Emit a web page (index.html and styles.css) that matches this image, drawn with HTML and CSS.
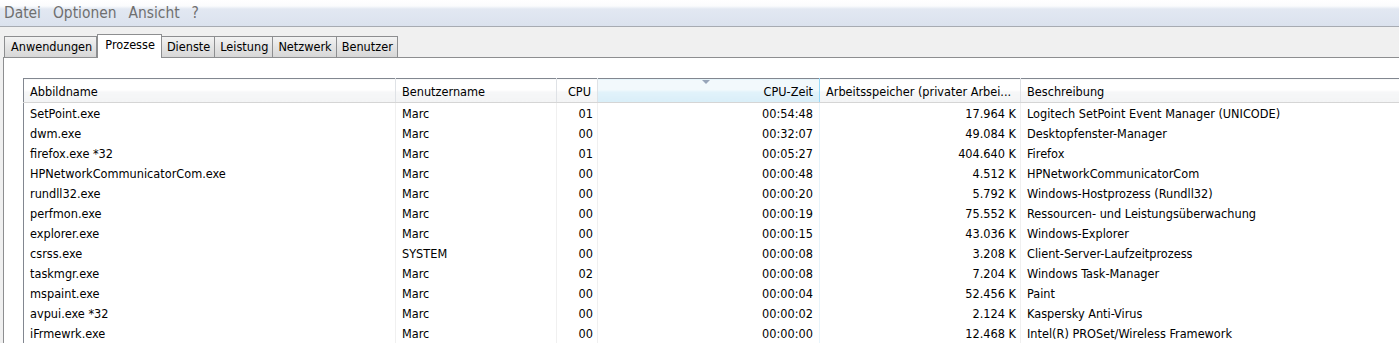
FILE: index.html
```html
<!DOCTYPE html>
<html lang="de">
<head>
  <meta charset="UTF-8">
  <title>Windows Task-Manager</title>
  <link rel="stylesheet" href="styles.css">
</head>
<body>
<div class="menubar">
  <span>Datei</span>
  <span>Optionen</span>
  <span>Ansicht</span>
  <span>?</span>
</div>
<div class="tabs">
  <a class="tab">Anwendungen</a>
  <a class="tab active">Prozesse</a>
  <a class="tab">Dienste</a>
  <a class="tab">Leistung</a>
  <a class="tab">Netzwerk</a>
  <a class="tab">Benutzer</a>
</div>
<div class="panel">
  <table class="list" cellspacing="0" cellpadding="0">
    <colgroup>
      <col class="c-name">
      <col class="c-user">
      <col class="c-cpu">
      <col class="c-time">
      <col class="c-mem">
      <col class="c-desc">
    </colgroup>
    <thead>
      <tr>
        <th>Abbildname</th>
        <th>Benutzername</th>
        <th class="num">CPU</th>
        <th class="num sorted"><span class="arrow"></span>CPU-Zeit</th>
        <th>Arbeitsspeicher (privater Arbei...</th>
        <th>Beschreibung</th>
      </tr>
    </thead>
    <tbody>
      <tr><td>SetPoint.exe</td><td>Marc</td><td class="num">01</td><td class="num sorted">00:54:48</td><td class="num">17.964 K</td><td>Logitech SetPoint Event Manager (UNICODE)</td></tr>
      <tr><td>dwm.exe</td><td>Marc</td><td class="num">00</td><td class="num sorted">00:32:07</td><td class="num">49.084 K</td><td>Desktopfenster-Manager</td></tr>
      <tr><td>firefox.exe *32</td><td>Marc</td><td class="num">01</td><td class="num sorted">00:05:27</td><td class="num">404.640 K</td><td>Firefox</td></tr>
      <tr><td>HPNetworkCommunicatorCom.exe</td><td>Marc</td><td class="num">00</td><td class="num sorted">00:00:48</td><td class="num">4.512 K</td><td>HPNetworkCommunicatorCom</td></tr>
      <tr><td>rundll32.exe</td><td>Marc</td><td class="num">00</td><td class="num sorted">00:00:20</td><td class="num">5.792 K</td><td>Windows-Hostprozess (Rundll32)</td></tr>
      <tr><td>perfmon.exe</td><td>Marc</td><td class="num">00</td><td class="num sorted">00:00:19</td><td class="num">75.552 K</td><td>Ressourcen- und Leistungsüberwachung</td></tr>
      <tr><td>explorer.exe</td><td>Marc</td><td class="num">00</td><td class="num sorted">00:00:15</td><td class="num">43.036 K</td><td>Windows-Explorer</td></tr>
      <tr><td>csrss.exe</td><td>SYSTEM</td><td class="num">00</td><td class="num sorted">00:00:08</td><td class="num">3.208 K</td><td>Client-Server-Laufzeitprozess</td></tr>
      <tr><td>taskmgr.exe</td><td>Marc</td><td class="num">02</td><td class="num sorted">00:00:08</td><td class="num">7.204 K</td><td>Windows Task-Manager</td></tr>
      <tr><td>mspaint.exe</td><td>Marc</td><td class="num">00</td><td class="num sorted">00:00:04</td><td class="num">52.456 K</td><td>Paint</td></tr>
      <tr><td>avpui.exe *32</td><td>Marc</td><td class="num">00</td><td class="num sorted">00:00:02</td><td class="num">2.124 K</td><td>Kaspersky Anti-Virus</td></tr>
      <tr><td>iFrmewrk.exe</td><td>Marc</td><td class="num">00</td><td class="num sorted">00:00:00</td><td class="num">12.468 K</td><td>Intel(R) PROSet/Wireless Framework</td></tr>
    </tbody>
  </table>
</div>
</body>
</html>
```

FILE: styles.css
```css
* {
  margin: 0;
  padding: 0;
  box-sizing: border-box;
}
html, body {
  width: 100%;
  height: 100%;
  overflow: hidden;
}
body {
  background-color: #f0f0f0;
  font-family: "DejaVu Sans", sans-serif;
  font-stretch: condensed;
  font-size: 12.6px;
  color: #000;
}
.menubar {
  height: 27px;
  padding: 0 0 1px 4px;
  display: flex;
  align-items: center;
  gap: 12px;
  background-image: linear-gradient(#ffffff 0px, #fbfcfd 6px, #e2e8f2 9px, #dbe2ee 26px);
  border-bottom: 1px solid #a7abb2;
  font-size: 15.4px;
  color: #6f6f6f;
}
.tabs {
  display: flex;
  align-items: flex-end;
  height: 30px;
  padding-left: 4px;
}
.tab {
  display: block;
  height: 21px;
  line-height: 20px;
  padding: 0 4px 0 5px;
  border: 1px solid #8d8e90;
  border-bottom: none;
  border-left: none;
  background-image: linear-gradient(#f3f3f3, #e4e4e4 50%, #d7d7d7);
  white-space: nowrap;
}
.tab:first-child {
  border-left: 1px solid #8d8e90;
  padding-left: 6px;
}
.tab.active {
  height: 24px;
  line-height: 20px;
  margin-bottom: -1px;
  padding: 0 6px 0 7px;
  border-left: 1px solid #8d8e90;
  background: #fff;
  position: relative;
}
.tab.active + .tab {
  border-left: none;
}
.panel {
  margin-left: 3px;
  height: 400px;
  background: #fff;
  border-top: 1px solid #8d8e90;
  border-left: 1px solid #8d8e90;
  padding: 20px 0 0 19px;
}
.list {
  table-layout: fixed;
  width: 1620px;
  border-collapse: collapse;
  border-top: 1px solid #828790;
  border-left: 1px solid #828790;
}
.c-name { width: 372px; }
.c-user { width: 161px; }
.c-cpu { width: 41px; }
.c-time { width: 222px; }
.c-mem { width: 201px; }
.c-desc { width: 623px; }
.list th {
  height: 24px;
  padding: 2px 6px 0 6px;
  font-weight: normal;
  text-align: left;
  background-image: linear-gradient(#ffffff 45%, #f6f7f8 55%, #f3f4f5);
  border-right: 1px solid #dfe2e6;
  border-bottom: 1px solid #d5d5d5;
  white-space: nowrap;
  overflow: hidden;
}
.list th.sorted {
  position: relative;
  background-image: linear-gradient(#f2f9fc 45%, #e1f2fa 55%, #d9eef8);
  border-left: 1px solid #96d9f9;
  border-right: 1px solid #96d9f9;
}
.list th.num, .list td.num {
  text-align: right;
}
.arrow {
  position: absolute;
  left: 104px;
  top: 1px;
  width: 0;
  height: 0;
  border-left: 4px solid transparent;
  border-right: 4px solid transparent;
  border-top: 4px solid #97a5b9;
}
.list td {
  height: 20px;
  padding: 1px 6px 0 6px;
  white-space: nowrap;
  overflow: hidden;
  border-right: 1px solid #f0f0f0;
}
.list td.num {
  padding-right: 4px;
}
.list td.sorted {
  border-left: 1px solid #e8f4fb;
  border-right: 1px solid #e8f4fb;
  padding-right: 6px;
}
```
